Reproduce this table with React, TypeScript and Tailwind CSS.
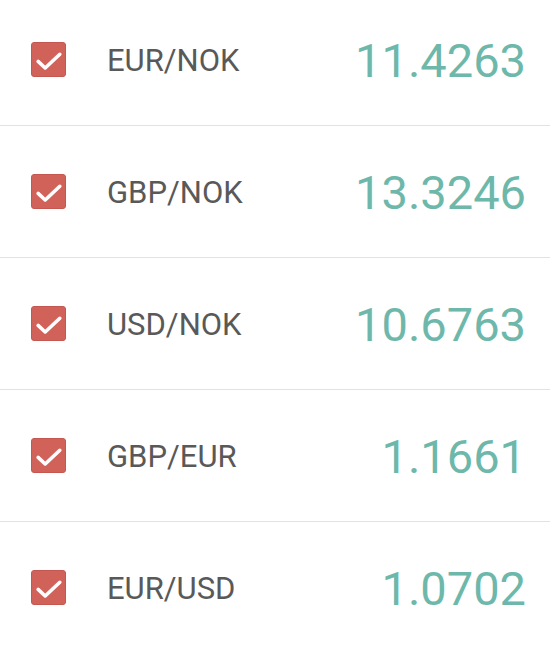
import React from 'react';

const rates = [
  { pair: 'EUR/NOK', value: '11.4263' },
  { pair: 'GBP/NOK', value: '13.3246' },
  { pair: 'USD/NOK', value: '10.6763' },
  { pair: 'GBP/EUR', value: '1.1661' },
  { pair: 'EUR/USD', value: '1.0702' },
];

const CheckBox = () => (
  <div className="w-[35px] h-[35px] rounded-[3px] bg-[#d0625a] border border-[#c45850] flex items-center justify-center shrink-0">
    <svg viewBox="0 0 35 35" className="w-[35px] h-[35px]">
      <polyline points="6.5,19.5 14,26.5 29.5,12" fill="none" stroke="#fff" strokeWidth="3.8" strokeLinecap="round" strokeLinejoin="round" />
    </svg>
  </div>
);

export default function App() {
  return (
    <div className="w-[550px] h-[650px] overflow-hidden bg-white" style={{ fontFamily: 'Roboto, "Noto Sans", sans-serif' }}>
      <div className="-mt-[6px]">
        {rates.map((r) => (
          <div key={r.pair} className="h-[132px] flex items-center border-b border-[#e2e2e2] pl-[31px] pr-[24px]">
            <CheckBox />
            <span className="ml-[41px] pt-[3px] text-[31px] text-[#595959]">{r.pair}</span>
            <span className="ml-auto pt-[2px] text-[47px] text-[#6db8ab] leading-none">{r.value}</span>
          </div>
        ))}
      </div>
    </div>
  );
}
